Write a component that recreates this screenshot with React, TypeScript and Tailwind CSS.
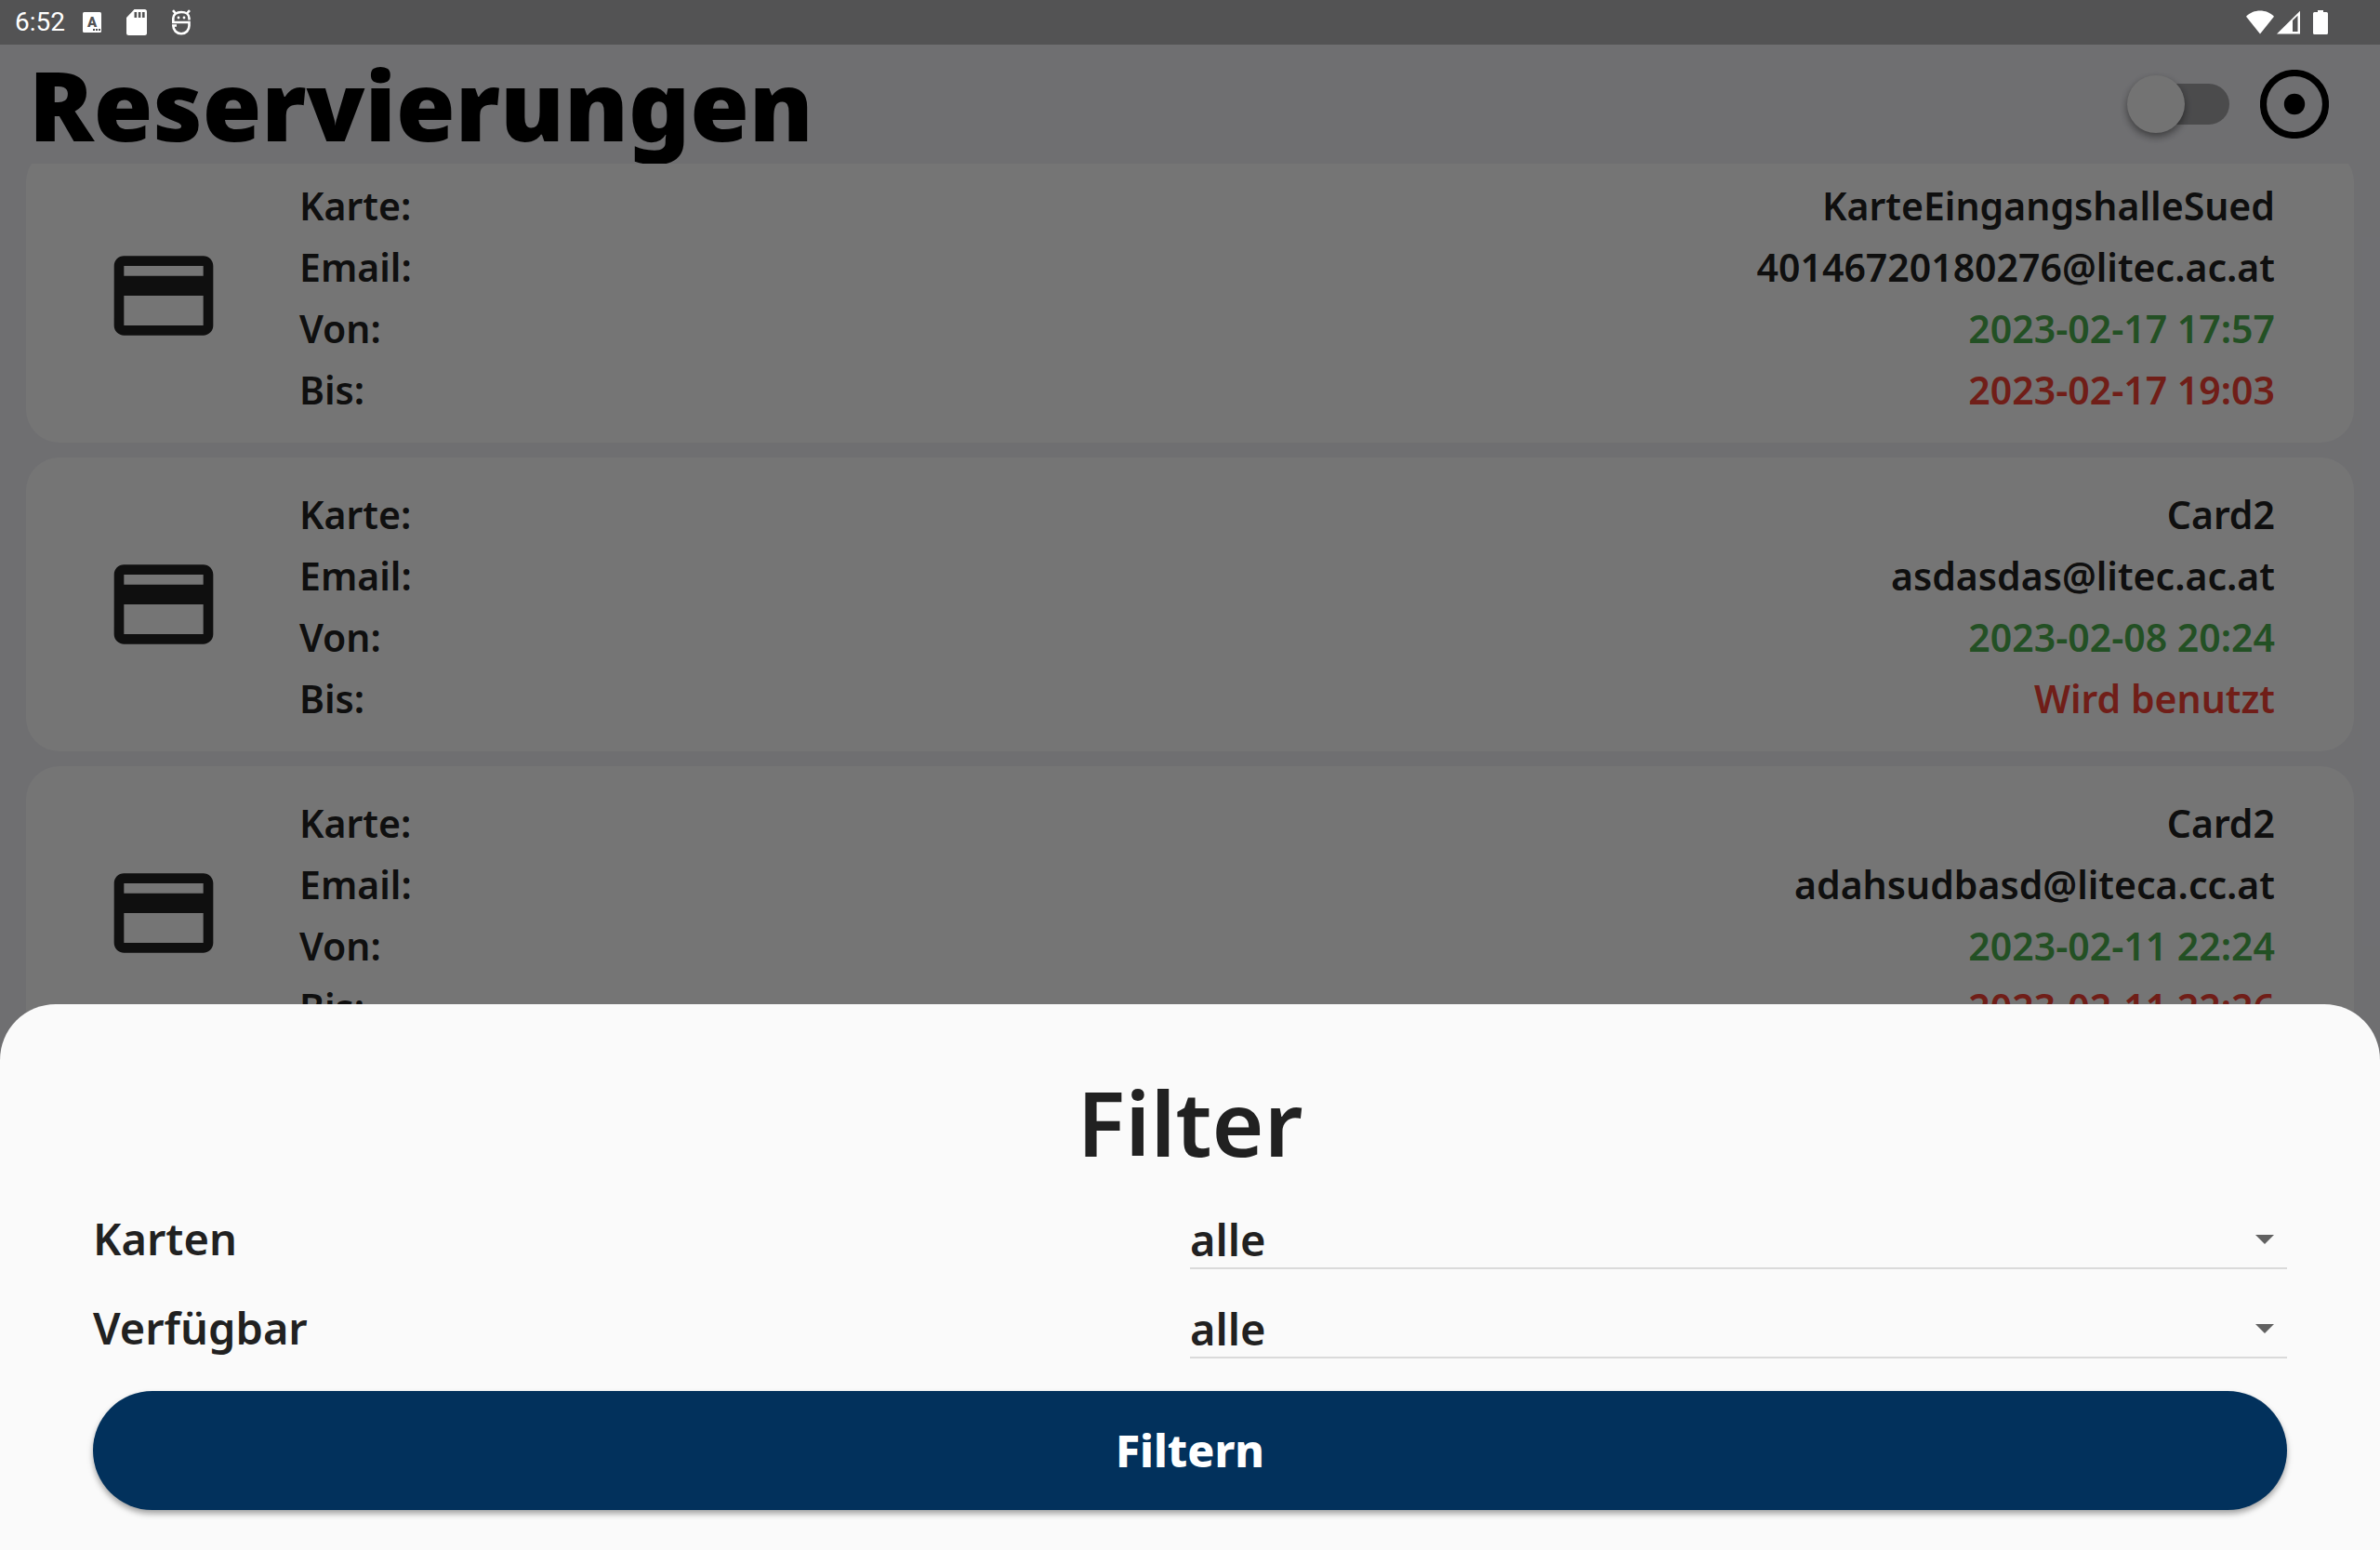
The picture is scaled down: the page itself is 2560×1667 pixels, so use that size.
import { useState } from "react";

type Reservation = { card: string; email: string; from: string; to: string };

const reservations: Reservation[] = [
  { card: "KarteEingangshalleSued", email: "40146720180276@litec.ac.at", from: "2023-02-17 17:57", to: "2023-02-17 19:03" },
  { card: "Card2", email: "asdasdas@litec.ac.at", from: "2023-02-08 20:24", to: "Wird benutzt" },
  { card: "Card2", email: "adahsudbasd@liteca.cc.at", from: "2023-02-11 22:24", to: "2023-02-11 22:26" },
];

function StatusBar() {
  return (
    <div className="relative z-20 flex h-12 shrink-0 items-center justify-between bg-[#535354] pr-14 pl-4 text-white">
      <div className="flex items-center">
        <span className="font-['Roboto',sans-serif] text-[28px] leading-8">6:52</span>
        <svg className="ml-[19px] h-[22px] w-5" viewBox="0 0 20 22" aria-hidden="true">
          <rect width="20" height="22" rx="1.5" fill="currentColor" />
          <text x="10" y="16" textAnchor="middle" fontFamily="Roboto, sans-serif" fontWeight="900" fontSize="15" fill="#535354">A</text>
          <path d="M11 18h2v2h-2zM14 18h2v2h-2zM17 18h2v2h-2z" fill="#535354" />
        </svg>
        <svg className="ml-[27px] h-7 w-[22px]" viewBox="0 0 22 28" aria-hidden="true">
          <path d="M8.5 0H19.5Q22 0 22 2.500V25.500Q22 28 19.500 28H2.500Q0 28 0 25.500V9Z" fill="currentColor" />
          <path d="M8.500 3h2.600v6H8.500zM12.800 3h2.600v6h-2.600zM17 3h2.600v6H17z" fill="#535354" />
        </svg>
        <svg className="ml-[26px] h-7 w-[22px]" viewBox="0 0 22 28" fill="none" stroke="currentColor" strokeWidth="2.6" aria-hidden="true">
          <path d="M19.500 11.500V9.500C19.500 5.500 16 3 11 3S2.300 5.500 2.300 9.500V14H19.500V17.500C19.500 22.500 16 26.200 11 26.200S2.300 22.500 2.300 17.500H6" />
          <path d="M5 4.500L2 1.200M17 4.500L20 1.200" />
          <circle cx="8" cy="9" r="1.400" fill="currentColor" stroke="none" />
          <circle cx="14" cy="9" r="1.400" fill="currentColor" stroke="none" />
        </svg>
      </div>
      <div className="flex items-center">
        <svg className="h-[26px] w-[30px]" viewBox="0 0 30 26" fill="currentColor" aria-hidden="true">
          <path d="M15 25.500L0 6.800C4 2.500 9.500.5 15 .5S26 2.500 30 6.800Z" />
        </svg>
        <svg className="ml-[3px] h-[26px] w-[25px]" viewBox="0 0 25 26" aria-hidden="true">
          <path fillRule="evenodd" fill="currentColor" d="M0 25.500L25 .8V25.500ZM17 11L22.500 5.800V23H17Z" />
        </svg>
        <svg className="ml-3.5 h-[26px] w-4" viewBox="0 0 16 26" fill="currentColor" aria-hidden="true">
          <path d="M5 0H11V2H14.500Q16 2 16 3.500V24.500Q16 26 14.500 26H1.500Q0 26 0 24.500V3.500Q0 2 1.500 2H5Z" />
        </svg>
      </div>
    </div>
  );
}

function Header() {
  const [active, setActive] = useState(false);
  return (
    <header className="flex h-32 shrink-0 items-center justify-between pr-[55px] pl-[31px]">
      <h1 className="text-[103px] leading-[126px] font-black text-black">Reservierungen</h1>
      <div className="flex items-center gap-[33px]">
        <label className="relative flex h-[62px] w-[110px] items-center justify-end">
          <input
            type="checkbox"
            role="switch"
            aria-label="Nur aktive anzeigen"
            checked={active}
            onChange={(e) => setActive(e.target.checked)}
            className="peer sr-only"
          />
          <span className="h-11 w-[100px] rounded-full bg-black/32" />
          <span className="absolute top-0 left-0 size-[62px] rounded-full bg-[#fafafa] shadow-[0_4px_8px_rgba(0,0,0,0.45)] peer-checked:translate-x-12" />
        </label>
        <button type="button" aria-label="Filter öffnen" className="size-[74px] text-black">
          <svg className="size-full" viewBox="0 0 74 74" fill="none" aria-hidden="true">
            <circle cx="37" cy="37" r="33.500" stroke="currentColor" strokeWidth="7.200" />
            <circle cx="37" cy="37" r="11.200" fill="currentColor" />
          </svg>
        </button>
      </div>
    </header>
  );
}

function ReservationCard({ card, email, from, to }: Reservation) {
  return (
    <li className="flex items-center rounded-[36px] bg-white pr-[85px] pl-[84px]">
      <svg className="size-32 shrink-0" viewBox="0 0 24 24" fill="currentColor" aria-hidden="true">
        <path d="M20 4H4c-1.110 0-1.990.89-1.990 2L2 18c0 1.110.89 2 2 2h16c1.110 0 2-.89 2-2V6c0-1.110-.89-2-2-2zm0 14H4v-6h16v6zm0-10H4V6h16v2z" />
      </svg>
      <dl className="ml-[82px] grid flex-1 grid-cols-[auto_1fr] pt-7 pb-6 text-[41px] leading-[66px] font-semibold">
        <dt>Karte:</dt>
        <dd className="text-right">{card}</dd>
        <dt>Email:</dt>
        <dd className="text-right">{email}</dd>
        <dt>Von:</dt>
        <dd className="text-right text-[#4caf50]">{from}</dd>
        <dt>Bis:</dt>
        <dd className="text-right text-[#f44336]">{to}</dd>
      </dl>
    </li>
  );
}

function SelectRow({ id, label }: { id: string; label: string }) {
  return (
    <div className="grid grid-cols-2 items-center text-[47px] leading-[64px] font-semibold">
      <label htmlFor={id}>{label}</label>
      <div className="relative">
        <select id={id} className="block h-[66px] w-full appearance-none border-b-2 border-[#dadada] bg-transparent pt-0.5 outline-none">
          <option>alle</option>
        </select>
        <svg className="pointer-events-none absolute top-[29px] right-3.5 h-2.5 w-5 text-[#616161]" viewBox="0 0 20 10" fill="currentColor" aria-hidden="true">
          <path d="M0 0H20L10 10Z" />
        </svg>
      </div>
    </div>
  );
}

function FilterSheet() {
  return (
    <section
      role="dialog"
      aria-modal="true"
      aria-labelledby="filter-title"
      className="absolute inset-x-0 bottom-0 z-20 rounded-t-[60px] bg-[#fafafa] px-[100px] pt-[55px] pb-[43px]"
    >
      <h2 id="filter-title" className="text-center text-8xl leading-[144px] font-semibold">Filter</h2>
      <form className="mt-5 flex flex-col gap-[30px]" onSubmit={(e) => e.preventDefault()}>
        <SelectRow id="karten" label="Karten" />
        <SelectRow id="verfuegbar" label="Verfügbar" />
        <button type="submit" className="mt-[5px] h-32 rounded-full bg-[#02315c] text-[48px] font-extrabold text-white shadow-[0_4px_6px_rgba(0,0,0,0.35)]">
          Filtern
        </button>
      </form>
    </section>
  );
}

export default function App() {
  return (
    <div className="relative flex h-screen flex-col overflow-hidden bg-[#f2f2f7] font-['Noto_Sans',sans-serif] text-[#212121]">
      <StatusBar />
      <Header />
      <main className="min-h-0 flex-1 overflow-hidden px-7">
        <ul className="-mt-4 flex flex-col gap-4">
          {reservations.map((r) => (
            <ReservationCard key={r.email} {...r} />
          ))}
        </ul>
      </main>
      <div className="absolute inset-0 z-10 bg-black/54" />
      <FilterSheet />
    </div>
  );
}
